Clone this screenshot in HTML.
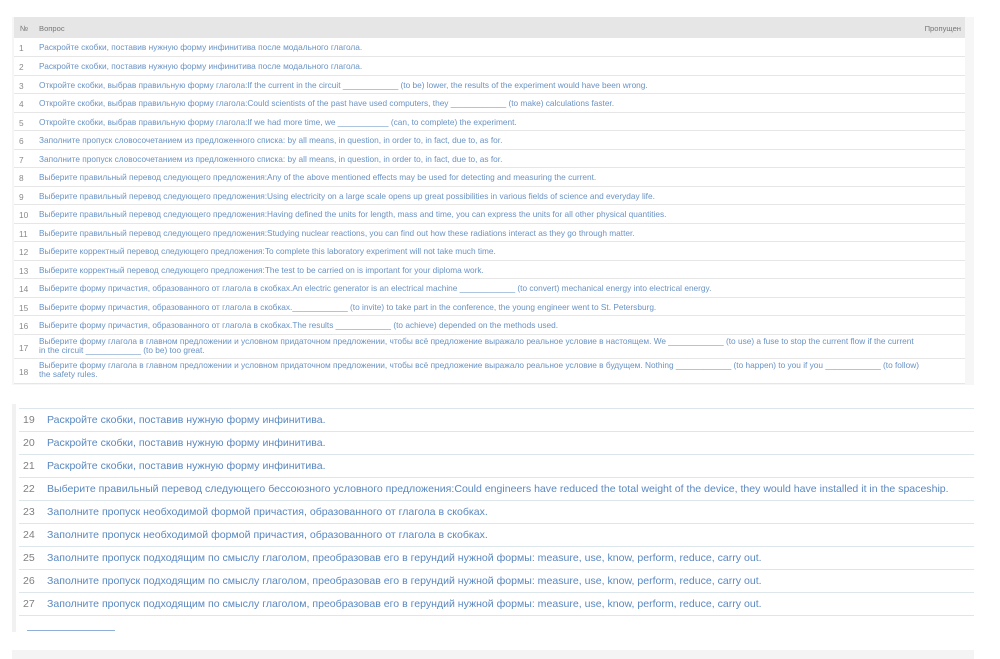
<!DOCTYPE html>
<html><head><meta charset="utf-8"><style>
*{margin:0;padding:0;box-sizing:border-box}
body{width:1000px;height:659px;background:#fff;font-family:"Liberation Sans",sans-serif;position:relative;overflow:hidden}
#t{position:absolute;left:12px;top:17px;width:962px;height:368px;background:#f6f6f6}
#th{position:absolute;left:14px;top:17px;width:951px;height:21px;background:#e6e6e6;font-size:7.6px;color:#777}
.r{position:absolute;left:14px;width:951px;background:#fff;border-bottom:1px solid #e6e6e6;font-size:8.3px;color:#6a93c4}
.r .n{position:absolute;left:5px;color:#8a8a8a}
.r .q{position:absolute;left:25px;width:880px;line-height:9px}
#b{position:absolute;left:12px;top:404px;width:4px;height:228px;background:#f1f1f1}
.s{position:absolute;left:19px;width:955px;height:23px;border-top:1px solid #dde6ea;font-size:10.55px;color:#5a88c0;line-height:22px}
.s .n{position:absolute;left:4px;color:#808080}
.s .q{position:absolute;left:28px;white-space:nowrap}
</style></head><body>
<div id="t"></div>
<div id="th"><span style="position:absolute;left:6px;top:7px">№</span><span style="position:absolute;left:25px;top:7px">Вопрос</span><span style="position:absolute;right:4px;top:7px">Пропущен</span></div>
<div class="r" style="top:38px;height:19px"><span class="n" style="top:5px">1</span><span class="q" style="top:5px">Раскройте скобки, поставив нужную форму инфинитива после модального глагола.</span></div>
<div class="r" style="top:57px;height:19px"><span class="n" style="top:5px">2</span><span class="q" style="top:5px">Раскройте скобки, поставив нужную форму инфинитива после модального глагола.</span></div>
<div class="r" style="top:76px;height:18px"><span class="n" style="top:5px">3</span><span class="q" style="top:5px">Откройте скобки, выбрав правильную форму глагола:If the current in the circuit ____________ (to be) lower, the results of the experiment would have been wrong.</span></div>
<div class="r" style="top:94px;height:19px"><span class="n" style="top:5px">4</span><span class="q" style="top:5px">Откройте скобки, выбрав правильную форму глагола:Could scientists of the past have used computers, they ____________ (to make) calculations faster.</span></div>
<div class="r" style="top:113px;height:18px"><span class="n" style="top:5px">5</span><span class="q" style="top:5px">Откройте скобки, выбрав правильную форму глагола:If we had more time, we ___________ (can, to complete) the experiment.</span></div>
<div class="r" style="top:131px;height:19px"><span class="n" style="top:5px">6</span><span class="q" style="top:5px">Заполните пропуск словосочетанием из предложенного списка: by all means, in question, in order to, in fact, due to, as for.</span></div>
<div class="r" style="top:150px;height:18px"><span class="n" style="top:5px">7</span><span class="q" style="top:5px">Заполните пропуск словосочетанием из предложенного списка: by all means, in question, in order to, in fact, due to, as for.</span></div>
<div class="r" style="top:168px;height:19px"><span class="n" style="top:5px">8</span><span class="q" style="top:5px">Выберите правильный перевод следующего предложения:Any of the above mentioned effects may be used for detecting and measuring the current.</span></div>
<div class="r" style="top:187px;height:18px"><span class="n" style="top:5px">9</span><span class="q" style="top:5px">Выберите правильный перевод следующего предложения:Using electricity on a large scale opens up great possibilities in various fields of science and everyday life.</span></div>
<div class="r" style="top:205px;height:19px"><span class="n" style="top:5px">10</span><span class="q" style="top:5px">Выберите правильный перевод следующего предложения:Having defined the units for length, mass and time, you can express the units for all other physical quantities.</span></div>
<div class="r" style="top:224px;height:18px"><span class="n" style="top:5px">11</span><span class="q" style="top:5px">Выберите правильный перевод следующего предложения:Studying nuclear reactions, you can find out how these radiations interact as they go through matter.</span></div>
<div class="r" style="top:242px;height:19px"><span class="n" style="top:5px">12</span><span class="q" style="top:5px">Выберите корректный перевод следующего предложения:To complete this laboratory experiment will not take much time.</span></div>
<div class="r" style="top:261px;height:18px"><span class="n" style="top:5px">13</span><span class="q" style="top:5px">Выберите корректный перевод следующего предложения:The test to be carried on is important for your diploma work.</span></div>
<div class="r" style="top:279px;height:19px"><span class="n" style="top:5px">14</span><span class="q" style="top:5px">Выберите форму причастия, образованного от глагола в скобках.An electric generator is an electrical machine ____________ (to convert) mechanical energy into electrical energy.</span></div>
<div class="r" style="top:298px;height:18px"><span class="n" style="top:5px">15</span><span class="q" style="top:5px">Выберите форму причастия, образованного от глагола в скобках.____________ (to invite) to take part in the conference, the young engineer went to St. Petersburg.</span></div>
<div class="r" style="top:316px;height:19px"><span class="n" style="top:5px">16</span><span class="q" style="top:5px">Выберите форму причастия, образованного от глагола в скобках.The results ____________ (to achieve) depended on the methods used.</span></div>
<div class="r" style="top:335px;height:24px"><span class="n" style="top:8px">17</span><span class="q" style="top:2px">Выберите форму глагола в главном предложении и условном придаточном предложении, чтобы всё предложение выражало реальное условие в настоящем. We ____________ (to use) a fuse to stop the current flow if the current<br>in the circuit ____________ (to be) too great.</span></div>
<div class="r" style="top:359px;height:25px"><span class="n" style="top:8px">18</span><span class="q" style="top:2px">Выберите форму глагола в главном предложении и условном придаточном предложении, чтобы всё предложение выражало реальное условие в будущем. Nothing ____________ (to happen) to you if you ____________ (to follow)<br>the safety rules.</span></div>

<div id="b"></div>
<div class="s" style="top:408px"><span class="n">19</span><span class="q">Раскройте скобки, поставив нужную форму инфинитива.</span></div>
<div class="s" style="top:431px"><span class="n">20</span><span class="q">Раскройте скобки, поставив нужную форму инфинитива.</span></div>
<div class="s" style="top:454px"><span class="n">21</span><span class="q">Раскройте скобки, поставив нужную форму инфинитива.</span></div>
<div class="s" style="top:477px"><span class="n">22</span><span class="q">Выберите правильный перевод следующего бессоюзного условного предложения:Could engineers have reduced the total weight of the device, they would have installed it in the spaceship.</span></div>
<div class="s" style="top:500px"><span class="n">23</span><span class="q">Заполните пропуск необходимой формой причастия, образованного от глагола в скобках.</span></div>
<div class="s" style="top:523px"><span class="n">24</span><span class="q">Заполните пропуск необходимой формой причастия, образованного от глагола в скобках.</span></div>
<div class="s" style="top:546px"><span class="n">25</span><span class="q">Заполните пропуск подходящим по смыслу глаголом, преобразовав его в герундий нужной формы: measure, use, know, perform, reduce, carry out.</span></div>
<div class="s" style="top:569px"><span class="n">26</span><span class="q">Заполните пропуск подходящим по смыслу глаголом, преобразовав его в герундий нужной формы: measure, use, know, perform, reduce, carry out.</span></div>
<div class="s" style="top:592px"><span class="n">27</span><span class="q">Заполните пропуск подходящим по смыслу глаголом, преобразовав его в герундий нужной формы: measure, use, know, perform, reduce, carry out.</span></div>
<div style="position:absolute;left:19px;top:615px;width:955px;border-top:1px solid #dde6ea"></div>
<div style="position:absolute;left:27px;top:630px;width:88px;border-top:1px solid #8fb0d4"></div>
<div style="position:absolute;left:12px;top:650px;width:962px;height:9px;background:#f4f4f4"></div>
</body></html>
